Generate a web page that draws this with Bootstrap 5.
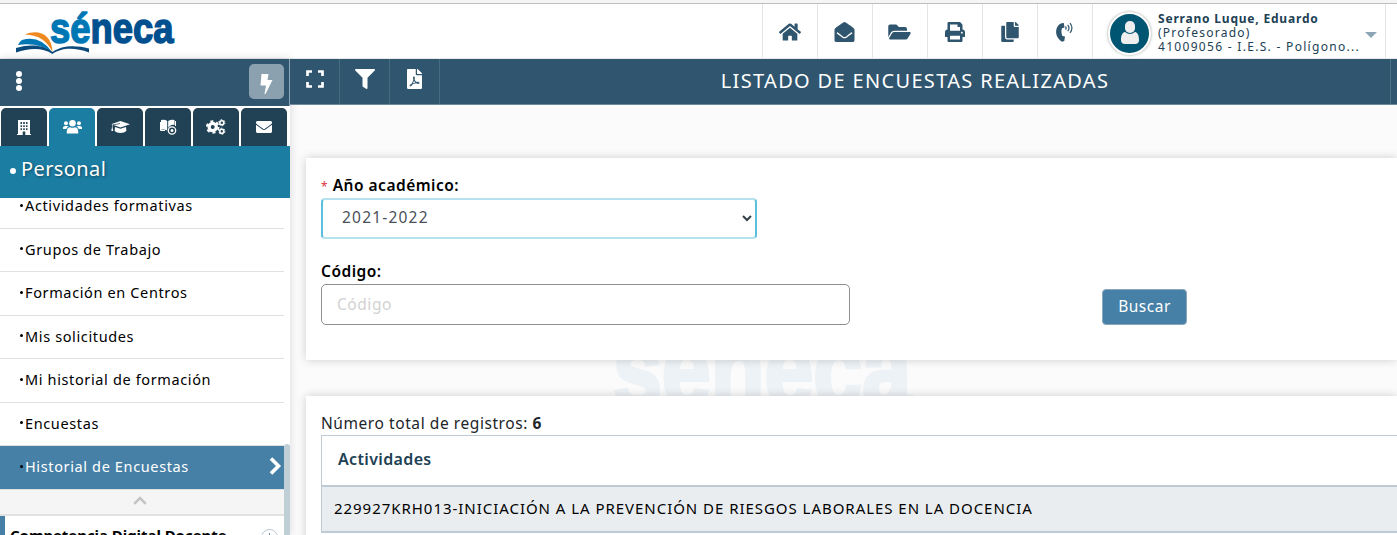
<!DOCTYPE html>
<html lang="es">
<head>
<meta charset="utf-8">
<meta name="viewport" content="width=device-width, initial-scale=1">
<title>Séneca - Listado de encuestas realizadas</title>
<link href="https://cdn.jsdelivr.net/npm/bootstrap@5.3.0/dist/css/bootstrap.min.css" rel="stylesheet">
<style>
  :root { --navy:#30556e; --dark:#214154; --teal:#1c7da3; --steel:#4780a6; --line:#bfcbd4; }
  body { height:535px; overflow:hidden; background:#fbfbfb; color:#212529; font-family:"Noto Sans","Open Sans",sans-serif; font-size:15px; line-height:20px; }
  svg { display:block; }
  .t { white-space:nowrap; }
  .topstrip { height:4px; background:#f5f5f5; border-bottom:1px solid #bdbdbd; }
  .mainhead { height:55px; border-bottom:1px solid #e8e8e8; padding-left:15px; }
  .tool { width:55px; border-left:1px solid #e5e5e5; color:var(--navy); padding:1px 1px 0 0; }
  .userbox { width:294px; border-left:1px solid #e5e5e5; border-right:1px solid #e5e5e5; padding:4px 0 0 15px; color:var(--dark); font-size:12px; line-height:14px; }
  .face { width:43px; height:43px; border:2px solid #fff; background:#005573; box-shadow:0 0 3px #999; }
  .usertext { width:207px; margin-left:7px; }
  .caret { border:6px solid transparent; border-top-color:#8ca5b7; border-bottom:0; }
  .side { width:290px; height:476px; background:#fff; box-shadow:0 0 9px rgba(0,0,0,.14); }
  .sidebar-head { height:47px; background:var(--navy); border-right:1px solid #8fa5b3; padding:0 5px 0 15px; }
  .flash { width:35px; height:35px; border-radius:5px; background:#8ba1b0; margin-bottom:2px; }
  .tabs { height:40px; padding:2px 0 0 1px; gap:2px; }
  .tab { width:46px; background:var(--dark); color:#fff; border-radius:5px 5px 0 0; }
  .tab.on { background:var(--teal); }
  .section { height:52px; background:var(--teal); color:#fff; font-size:20px; letter-spacing:.4px; padding:0 0 6px 10px; text-shadow:1px 1px 3px rgba(0,0,0,.45); }
  .section i { width:6px; height:6px; border-radius:50%; background:#fff; margin:4px 5px 0 0; }
  .menuwrap { height:337px; overflow:hidden; }
  .menu { width:284px; margin-top:-13px; color:#000; }
  .entry { height:43.5px; border-bottom:1px solid #e1e1e1; padding:0 2px 2px 20px; font-size:14.5px; letter-spacing:.63px; }
  .entry i { width:3px; height:3px; border-radius:50%; background:#000; margin-right:2px; }
  .entry.on { background:var(--steel); color:#fff; }
  .fold { height:26.5px; background:#f5f5f5; border-bottom:2px solid #e2e2e2; padding-bottom:2px; }
  .group { height:44px; border-left:5px solid var(--steel); padding:9px 6px 0 5px; color:#000; letter-spacing:-.05px; }
  .thumb { width:6px; background:#c0ced6; margin-top:246px; border-radius:3px 3px 0 0; }
  .bar { height:46px; background:var(--navy); border-bottom:1px solid #6d899b; color:#fff; }
  .act { width:50px; border-right:1px solid #496b81; padding-bottom:5px; }
  .title { font-size:20px; letter-spacing:1.33px; padding-bottom:1px; }
  .endcap { width:7px; border-left:1px solid #4d6e84; }
  .panel { background:#fff; margin-left:16px; box-shadow:0 0 9px rgba(0,0,0,.18); padding-left:15px; position:relative; }
  .panel-a { margin-top:53px; height:202px; padding-top:17px; }
  .panel-b { margin-top:36px; height:160px; padding-top:17px; }
  .lbl { color:#000; font-size:15.5px; font-weight:600; letter-spacing:.5px; }
  .year { width:436px; height:41px; margin-top:1px; border:2px solid #b5e2ee; border-left-color:#5bc0de; border-right-color:#5bc0de; border-radius:4px; padding:0 19px 2px; font-size:15.5px; letter-spacing:1.2px; color:#495057;
    background:#fff url("data:image/svg+xml,%3Csvg xmlns='http://www.w3.org/2000/svg' width='10' height='7'%3E%3Cpath d='M1 1l4 4 4-4' fill='none' stroke='%23333f48' stroke-width='2'/%3E%3C/svg%3E") no-repeat right 3px center; }
  .code { width:529px; height:41px; border:1px solid #8f8f8f; border-radius:5px; padding:0 15px 2px; font-size:15.5px; letter-spacing:.55px; }
  .code::placeholder { color:#d2d2d2; opacity:1; }
  .btn-find { width:85px; height:36px; margin-left:252px; margin-top:5px; padding:0; background:var(--steel); border:1px solid #8ba6b8; border-radius:4px; color:#fff; font-size:15.5px; letter-spacing:.5px; }
  .count { font-size:15.5px; letter-spacing:.57px; }
  .grid-box { border:1px solid var(--line); border-right:0; margin-top:2px; }
  .grid-head { height:51px; border-bottom:2px solid var(--line); padding:0 0 3px 16px; color:var(--dark); font-weight:600; font-size:16px; letter-spacing:.35px; }
  .grid-row { height:45px; background:#e9edf0; border-bottom:1px solid var(--line); padding:0 0 2px 12px; color:#000; letter-spacing:.96px; }
  .water { position:absolute; left:600px; top:290px; }
</style>
</head>
<body>
<div class="topstrip"></div>
<header class="mainhead d-flex bg-white justify-content-between">
  <svg width="162" height="52" viewBox="15 4 162 52">
    <defs><linearGradient id="ink" gradientUnits="userSpaceOnUse" x1="50" x2="174" y1="0" y2="0"><stop offset=".33" stop-color="#0077b5"/><stop offset=".335" stop-color="#00508f"/></linearGradient></defs>
    <path d="M25 34.500C37 29 52 33 52.500 52C47 41 39 35 25 34.500Z" fill="#ef8a22"/>
    <path d="M22 40Q40 35 52 52Q38 42 18 45Q19 42 22 40Z" fill="#0077b5"/>
    <path d="M16 48C32 43 45 46 52.500 52C62 45 76 45 89 48.500V52.500C74 46.500 60 48 52.500 54C43 47.500 30 47.500 16 52.500Z" fill="#0b4a7b"/>
    <text x="50" y="42.500" font-family="Liberation Sans" font-weight="700" font-size="43" textLength="123.500" lengthAdjust="spacingAndGlyphs" fill="url(#ink)" stroke="url(#ink)" stroke-width="1.500">séneca</text>
  </svg>
  <div class="d-flex">
    <div class="tool d-flex align-items-center justify-content-center"><svg width="22" height="20" viewBox="0 0 576 512" fill="currentColor"><path d="M280.370 148.260L96 300.110V464a16 16 0 0 0 16 16l112.060-.290a16 16 0 0 0 15.920-16V368a16 16 0 0 1 16-16h64a16 16 0 0 1 16 16v95.640a16 16 0 0 0 16 16.050L464 480a16 16 0 0 0 16-16V300L295.670 148.260a12.190 12.190 0 0 0-15.300 0zM571.600 251.470L488 182.560V44.050a12 12 0 0 0-12-12h-56a12 12 0 0 0-12 12v72.610L318.470 43a48 48 0 0 0-61 0L4.340 251.470a12 12 0 0 0-1.600 16.900l25.500 31A12 12 0 0 0 45.150 301l235.220-193.740a12.190 12.190 0 0 1 15.300 0L530.900 301a12 12 0 0 0 16.900-1.600l25.500-31a12 12 0 0 0-1.700-16.930z"/></svg></div>
    <div class="tool d-flex align-items-center justify-content-center"><svg width="21" height="20" viewBox="0 0 512 512" fill="currentColor"><path d="M512 464c0 26.510-21.490 48-48 48H48c-26.510 0-48-21.490-48-48V200.724a48 48 0 0 1 18.387-37.776c24.913-19.529 45.501-35.365 164.200-121.511C199.412 29.170 232.797-.347 256 .003c23.198-.354 56.596 29.172 73.413 41.433 118.687 86.137 139.303 101.995 164.200 121.512A48 48 0 0 1 512 200.724V464zm-65.666-196.605c-2.563-3.728-7.700-4.595-11.339-1.907-22.845 16.873-55.462 40.705-105.582 77.079-16.825 12.266-50.210 41.781-73.413 41.430-23.211.344-56.559-29.143-73.413-41.430-50.114-36.370-82.734-60.204-105.582-77.079-3.639-2.688-8.776-1.821-11.339 1.907l-9.072 13.196a7.998 7.998 0 0 0 1.839 10.967c22.887 16.899 55.454 40.690 105.303 76.868 20.274 14.781 56.524 47.813 92.264 47.573 35.724.242 71.961-32.771 92.263-47.573 49.850-36.179 82.418-59.970 105.303-76.868a7.998 7.998 0 0 0 1.839-10.967l-9.071-13.196z"/></svg></div>
    <div class="tool d-flex align-items-center justify-content-center"><svg width="23" height="20" viewBox="0 0 576 512" fill="currentColor"><path d="M572.694 292.093L500.270 416.248A63.997 63.997 0 0 1 444.989 448H45.025c-18.523 0-30.064-20.093-20.731-36.093l72.424-124.155A64 64 0 0 1 152 256h399.964c18.523 0 30.064 20.093 20.730 36.093zM152 224h328v-48c0-26.510-21.490-48-48-48H272l-64-64H48C21.490 64 0 85.490 0 112v278.046l69.077-118.418C86.214 242.250 117.989 224 152 224z"/></svg></div>
    <div class="tool d-flex align-items-center justify-content-center"><svg width="20" height="20" viewBox="0 0 512 512" fill="currentColor"><path d="M448 192V77.250c0-8.490-3.370-16.620-9.370-22.630L393.370 9.370c-6-6-14.140-9.370-22.630-9.370H96C78.330 0 64 14.330 64 32v160c-35.350 0-64 28.650-64 64v112c0 8.840 7.160 16 16 16h48v96c0 17.670 14.330 32 32 32h320c17.670 0 32-14.330 32-32v-96h48c8.840 0 16-7.160 16-16V256c0-35.350-28.650-64-64-64zm-64 256H128v-96h256v96zm0-224H128V64h192v48c0 8.840 7.160 16 16 16h48v96zm48 72c-13.250 0-24-10.750-24-24 0-13.260 10.750-24 24-24s24 10.740 24 24c0 13.250-10.750 24-24 24z"/></svg></div>
    <div class="tool d-flex align-items-center justify-content-center"><svg width="18" height="20" viewBox="0 0 448 512" fill="currentColor"><path d="M320 448v40c0 13.255-10.745 24-24 24H24c-13.255 0-24-10.745-24-24V120c0-13.255 10.745-24 24-24h72v296c0 30.879 25.121 56 56 56h168zm0-344V0H152c-13.255 0-24 10.745-24 24v368c0 13.255 10.745 24 24 24h272c13.255 0 24-10.745 24-24V128H344c-13.200 0-24-10.800-24-24zm120.971-31.029L375.029 7.029A24 24 0 0 0 358.059 0H352v96h96v-6.059a24 24 0 0 0-7.029-16.970z"/></svg></div>
    <div class="tool d-flex align-items-center justify-content-center"><svg width="18" height="20" viewBox="0 0 18 20" fill="currentColor"><path d="M5.500 1.300L7.800 1 8.500 5.500 6 6.300Q4.600 10 6.400 14L9 14.500 8.300 19 6 19.700C-1.600 15-1.200 6 3.500 2.300Z"/><path d="M9.500 4.500Q10.800 6 9.500 7.600M11.700 2.800Q14.300 6 11.700 9.200M14 1.200Q17.900 6 14 10.800" fill="none" stroke="currentColor" stroke-width="1.200"/></svg></div>
    <div class="userbox d-flex align-items-center">
      <div class="face rounded-circle d-flex align-items-center justify-content-center flex-shrink-0"><svg width="20" height="26" viewBox="0 0 20 26" fill="#efefef"><rect x="5" y="1" width="10" height="12" rx="4.800"/><path d="M5 12C2 12.500 1 16 1 20Q1 24 5 24H15Q19 24 19 20C19 16 18 12.500 15 12Q10 16 5 12Z"/></svg></div>
      <div class="usertext t"><div><b style="letter-spacing:.8px">Serrano Luque, Eduardo</b></div><div><span style="letter-spacing:1.25px">(Profesorado)</span></div><div><span style="letter-spacing:1.3px">41009056 - I.E.S. - Polígono...</span></div></div>
      <div class="caret mt-1"></div>
    </div>
    <div style="width:11px"></div>
  </div>
</header>
<div class="d-flex">
  <aside class="side flex-shrink-0">
    <div class="sidebar-head d-flex align-items-center justify-content-between">
      <svg class="mb-1" width="8" height="20" viewBox="0 0 8 20" fill="#fff"><circle cx="4" cy="3" r="3"/><circle cx="4" cy="10" r="3"/><circle cx="4" cy="17" r="3"/></svg>
      <div class="flash d-flex align-items-center justify-content-center"><svg class="mt-1" width="13" height="20" viewBox="0 0 13 20" fill="#fff"><path d="M1.500 0H8.500L7.500 6H12.500L5.500 20H4.500L6 11.500H.5Z"/></svg></div>
    </div>
    <nav class="tabs d-flex">
      <div class="tab d-flex align-items-center justify-content-center"><svg width="14" height="15" viewBox="0 0 14 15"><path fill="#fff" fill-rule="evenodd" d="M1 0H13V14H14V15H8.300V11.500H5.700V15H0V14H1ZM3.500 2V4H5V2ZM6.200 2V4H7.800V2ZM9 2V4H10.500V2ZM3.500 5.200V7H5V5.200ZM6.200 5.200V7H7.800V5.200ZM9 5.200V7H10.500V5.200ZM3.500 8.200V10H5V8.200ZM6.200 8.200V10H7.800V8.200ZM9 8.200V10H10.500V8.200Z"/></svg></div>
      <div class="tab on d-flex align-items-center justify-content-center"><svg width="19" height="14" viewBox="0 0 19 14" fill="#fff"><circle cx="9.500" cy="3.300" r="3.300"/><circle cx="3" cy="3.300" r="2"/><circle cx="16" cy="3.300" r="2"/><path d="M3.800 13.500V11Q4 7.500 7.200 7.300Q9.500 8.300 11.800 7.300Q15 7.500 15.200 11V13.500ZM0 9V7.500Q.2 5.900 2 5.900H4Q5 5.900 5.500 6.600Q3.800 7.500 3.300 9ZM19 9V7.500Q18.800 5.900 17 5.900H15Q14 5.900 13.500 6.600Q15.200 7.500 15.700 9Z"/></svg></div>
      <div class="tab d-flex align-items-center justify-content-center"><svg width="19" height="14" viewBox="0 0 19 14" fill="#fff"><path d="M9.500 1L19 4.200 9.500 7.500 2.500 5 9 4V3.300L1.500 4.500V7L2.200 11H.3L1 7V4.300L0 4.200ZM4 7L9.500 8.800 15 7 15.400 10.800C13 13.700 6 13.700 3.600 10.800Z"/></svg></div>
      <div class="tab d-flex align-items-center justify-content-center"><svg width="17" height="17" viewBox="0 0 17 17"><path d="M1 1Q5 0 7.200 2V11.500Q4 9.800 1 10.800ZM8.200 2Q11 0 14.500 1V6Q9 5 8.200 11.500Z" fill="#fff"/><path d="M15.500 2V7M.5 3V11.500H5" stroke="#fff" fill="none"/><circle cx="12" cy="11.500" r="4.700" fill="#214154"/><circle cx="12" cy="11.500" r="3.700" fill="none" stroke="#fff" stroke-width="1.300"/><circle cx="12" cy="11.500" r="1.500" fill="#fff"/></svg></div>
      <div class="tab d-flex align-items-center justify-content-center"><svg width="20" height="16" viewBox="0 0 20 16" fill="none" stroke="#fff"><circle cx="6.700" cy="8" r="3.600" stroke-width="3.200"/><circle cx="6.700" cy="8" r="5.800" stroke-width="2" stroke-dasharray="3 3.070"/><circle cx="15.800" cy="3.700" r="2" stroke-width="1.600"/><circle cx="15.800" cy="3.700" r="3.100" stroke-width="1" stroke-dasharray="1.600 1.650"/><circle cx="15.800" cy="12.300" r="2" stroke-width="1.600"/><circle cx="15.800" cy="12.300" r="3.100" stroke-width="1" stroke-dasharray="1.600 1.650"/></svg></div>
      <div class="tab d-flex align-items-center justify-content-center"><svg width="16" height="16" viewBox="0 0 512 512" fill="#fff"><path d="M502.300 190.800c3.900-3.100 9.700-.2 9.700 4.700V400c0 26.500-21.500 48-48 48H48c-26.500 0-48-21.500-48-48V195.600c0-5 5.700-7.800 9.700-4.700 22.400 17.400 52.100 39.500 154.100 113.600 21.100 15.400 56.700 47.800 92.200 47.600 35.700.3 72-32.800 92.300-47.600 102-74.100 131.600-96.300 154-113.700zM256 320c23.200.4 56.600-29.200 73.400-41.400 132.700-96.300 142.800-104.700 173.400-128.700 5.800-4.500 9.200-11.500 9.200-18.900v-19c0-26.500-21.500-48-48-48H48c-26.500 0-48 21.500-48 48v19c0 7.400 3.400 14.300 9.200 18.900 30.600 23.900 40.700 32.400 173.400 128.700 16.800 12.200 50.200 41.800 73.400 41.400z"/></svg></div>
    </nav>
    <div class="section d-flex align-items-center"><i></i><span>Personal</span></div>
    <div class="menuwrap d-flex">
      <div class="menu">
        <div class="entry d-flex align-items-center"><i></i><span class="t">Actividades formativas</span></div>
        <div class="entry d-flex align-items-center"><i></i><span class="t">Grupos de Trabajo</span></div>
        <div class="entry d-flex align-items-center"><i></i><span class="t">Formación en Centros</span></div>
        <div class="entry d-flex align-items-center"><i></i><span class="t">Mis solicitudes</span></div>
        <div class="entry d-flex align-items-center"><i></i><span class="t">Mi historial de formación</span></div>
        <div class="entry d-flex align-items-center"><i></i><span class="t">Encuestas</span></div>
        <div class="entry on d-flex align-items-center"><i></i><span class="t">Historial de Encuestas</span><svg class="ms-auto" width="13" height="18" viewBox="0 0 13 18"><path d="M2 1.500L9.500 9 2 16.500" fill="none" stroke="#fff" stroke-width="3.600"/></svg></div>
        <div class="fold d-flex align-items-center justify-content-center"><svg style="margin-right:4px" width="14" height="9" viewBox="0 0 14 9"><path d="M1.200 7.800L7 2 12.800 7.800" fill="none" stroke="#c4c4c4" stroke-width="2.600"/></svg></div>
        <div class="group d-flex justify-content-between"><b class="t">Competencia Digital Docente</b><svg style="margin-top:4px" width="17" height="17" viewBox="0 0 17 17" fill="none" stroke="#b8c6d0"><circle cx="8.500" cy="8.500" r="8"/><path d="M8.500 4V13M5 9.500L8.500 13 12 9.500" stroke="#6d8ea5"/></svg></div>
      </div>
      <div class="thumb"></div>
    </div>
  </aside>
  <main class="flex-grow-1 overflow-hidden">
    <div class="bar d-flex">
      <div class="act d-flex align-items-center justify-content-center"><svg width="18" height="18" viewBox="0 0 18 18"><path d="M1.500 6V1.500H6M12 1.500H16.500V6M16.500 12V16.500H12M6 16.500H1.500V12" fill="none" stroke="#fff" stroke-width="2.700"/></svg></div>
      <div class="act d-flex align-items-center justify-content-center"><svg width="20" height="20" viewBox="0 0 512 512" fill="#fff"><path d="M487.976 0H24.028C2.710 0-8.047 25.866 7.058 40.971L192 225.941V432c0 7.831 3.821 15.170 10.237 19.662l80 55.980C298.020 518.690 320 507.493 320 487.980V225.941l184.947-184.970C520.021 25.896 509.338 0 487.976 0z"/></svg></div>
      <div class="act d-flex align-items-center justify-content-center"><svg width="15" height="20" viewBox="0 0 384 512" fill="#fff"><path d="M181.900 256.100c-5-16-4.900-46.900-2-46.900 8.400 0 7.600 36.900 2 46.900zm-1.700 47.200c-7.700 20.200-17.300 43.300-28.400 62.700 18.300-7 39-17.200 62.900-21.900-12.700-9.600-24.900-23.400-34.500-40.800zM86.100 428.100c0 .8 13.200-5.400 34.900-40.200-6.700 6.300-29.100 24.500-34.900 40.200zM248 160h136v328c0 13.300-10.700 24-24 24H24c-13.300 0-24-10.700-24-24V24C0 10.700 10.700 0 24 0h200v136c0 13.200 10.800 24 24 24zm-8 171.800c-20-12.200-33.300-29-42.700-53.800 4.500-18.500 11.600-46.600 6.200-64.200-4.700-29.400-42.400-26.500-47.800-6.800-5 18.300-.4 44.100 8.100 77-11.600 27.600-28.700 64.600-40.800 85.800-.1 0-.1.1-.2.1-27.100 13.900-73.600 44.500-54.500 68 5.600 6.900 16 10 21.500 10 17.900 0 35.700-18 61.100-61.800 25.800-8.500 54.100-19.100 79-23.200 21.700 11.800 47.100 19.500 64 19.500 29.200 0 31.200-32 19.700-43.400-13.900-13.600-54.300-9.700-73.600-7.200zM377 105L279 7c-4.500-4.500-10.600-7-17-7h-6v128h128v-6.100c0-6.300-2.500-12.400-7-16.900zm-74.100 255.300c4.100-2.700-2.500-11.900-42.800-9 37.100 15.800 42.800 9 42.800 9z"/></svg></div>
      <div class="title flex-grow-1 d-flex align-items-center justify-content-center"><span class="t">LISTADO DE ENCUESTAS REALIZADAS</span></div>
      <div class="endcap"></div>
    </div>
    <svg class="water" width="330" height="130" viewBox="600 290 330 130"><text x="613" y="406" font-family="Liberation Sans" font-weight="700" font-size="107" textLength="298" lengthAdjust="spacingAndGlyphs" fill="#edf2f6" stroke="#edf2f6" stroke-width="4">seneca</text></svg>
    <section class="panel panel-a">
      <div class="lbl t"><span class="text-danger fw-normal" style="font-size:12px">*</span> <span>Año académico:</span></div>
      <select class="year d-block form-control"><option>2021-2022</option></select>
      <div class="lbl t" style="margin-top:22px">Código:</div>
      <div class="d-flex" style="margin-top:3px"><input class="code form-control flex-shrink-0" placeholder="Código"><button class="btn btn-find">Buscar</button></div>
    </section>
    <section class="panel panel-b">
      <div class="t"><span class="count">Número total de registros: <b>6</b></span></div>
      <div class="grid-box">
        <div class="grid-head d-flex align-items-center"><span>Actividades</span></div>
        <div class="grid-row d-flex align-items-center"><span class="t">229927KRH013-INICIACIÓN A LA PREVENCIÓN DE RIESGOS LABORALES EN LA DOCENCIA</span></div>
      </div>
    </section>
  </main>
</div>
<script src="https://cdn.jsdelivr.net/npm/bootstrap@5.3.0/dist/js/bootstrap.bundle.min.js"></script>
</body>
</html>
